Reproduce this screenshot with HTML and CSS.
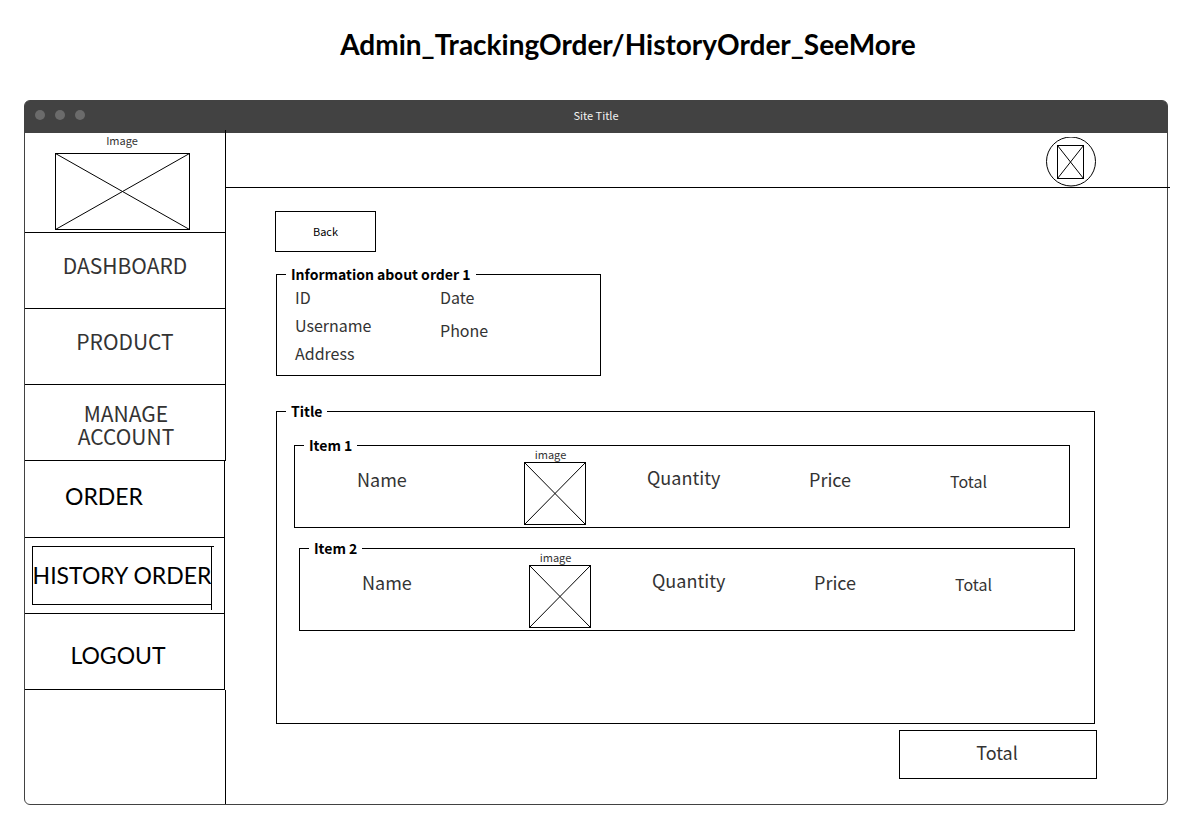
FILE: index.html
```html
<!DOCTYPE html>
<html lang="en">
<head>
<meta charset="utf-8">
<title>Admin_TrackingOrder/HistoryOrder_SeeMore</title>
<link rel="stylesheet" href="styles.css">
</head>
<body>
<h1 class="page-title">Admin_TrackingOrder/HistoryOrder_SeeMore</h1>
<div class="window">
  <div class="titlebar">
    <div class="dots"><span class="dot"></span><span class="dot"></span><span class="dot"></span></div>
    <span class="site-title">Site Title</span>
  </div>
  <div class="layout">
    <aside class="sidebar">
      <div class="brand">
        <span class="caption">Image</span>
        <svg class="brand-image" viewBox="0 0 135 77" role="img" aria-label="Image"><rect x=".5" y=".5" width="134" height="76"/><path d="M.5 .5 134.500 76.500M134.500 .5 .5 76.500"/></svg>
      </div>
      <nav class="nav">
        <a class="nav-item" href="#">DASHBOARD</a>
        <a class="nav-item" href="#">PRODUCT</a>
        <a class="nav-item nav-item-tall" href="#">MANAGE ACCOUNT</a>
        <a class="nav-item nav-item-dark nav-order" href="#">ORDER</a>
        <a class="nav-item nav-item-dark nav-current" href="#" aria-current="page"><span class="current-box">HISTORY ORDER</span></a>
        <a class="nav-item nav-item-dark nav-logout" href="#">LOGOUT</a>
      </nav>
      <div class="sidebar-rest"></div>
    </aside>
    <div class="content">
      <header class="topbar">
        <svg class="avatar" viewBox="0 0 50 50" role="img" aria-label="Profile"><circle cx="25" cy="24.500" r="24.500"/><rect x="11.500" y="8.500" width="26" height="33"/><path d="M11.500 8.500 37.500 41.500M37.500 8.500 11.500 41.500"/></svg>
      </header>
      <main class="main">
        <button class="back" type="button">Back</button>
        <fieldset class="group info">
          <legend>Information about order 1</legend>
          <div class="info-fields">
            <div class="info-col"><span>ID</span><span>Username</span><span>Address</span></div>
            <div class="info-col info-col-loose"><span>Date</span><span>Phone</span></div>
          </div>
        </fieldset>
        <fieldset class="group items">
          <legend>Title</legend>
          <fieldset class="group item">
            <legend>Item 1</legend>
            <div class="item-fields">
              <span class="field name">Name</span>
              <div class="thumb"><span class="caption">image</span><svg class="thumb-image" viewBox="0 0 62 63" role="img" aria-label="image"><rect x=".5" y=".5" width="61" height="62"/><path d="M.5 .5 61.500 62.500M61.500 .5 .5 62.500"/></svg></div>
              <span class="field quantity">Quantity</span>
              <span class="field price">Price</span>
              <span class="field total">Total</span>
            </div>
          </fieldset>
          <fieldset class="group item item-second">
            <legend>Item 2</legend>
            <div class="item-fields">
              <span class="field name">Name</span>
              <div class="thumb"><span class="caption">image</span><svg class="thumb-image" viewBox="0 0 62 63" role="img" aria-label="image"><rect x=".5" y=".5" width="61" height="62"/><path d="M.5 .5 61.500 62.500M61.500 .5 .5 62.500"/></svg></div>
              <span class="field quantity">Quantity</span>
              <span class="field price">Price</span>
              <span class="field total">Total</span>
            </div>
          </fieldset>
        </fieldset>
        <div class="grand-total">Total</div>
      </main>
    </div>
  </div>
</div>
</body>
</html>
```
FILE: styles.css
```css
* { box-sizing: border-box; }

body {
  margin: 0;
  padding: 0 35px 13px 24px;
  min-height: 100vh;
  display: flex;
  flex-direction: column;
  background: #fff;
  color: #333;
  font-family: "Noto Sans CJK SC", "Noto Sans", sans-serif;
}

svg { display: block; fill: none; stroke: #000; stroke-width: 1; }

.page-title {
  margin: 0;
  padding: 27px 0 0 64px;
  height: 100px;
  text-align: center;
  font: bold 28px/34px Lato, sans-serif;
  color: #000;
}

.window {
  flex: 1;
  display: flex;
  flex-direction: column;
  border: 1px solid #424242;
  border-radius: 6px;
}

.titlebar {
  height: 32px;
  display: grid;
  grid-template-columns: 1fr auto 1fr;
  align-items: center;
  padding: 0 10px 4px;
  background: #424242;
  border-radius: 4px 4px 0 0;
}
.dots { display: flex; gap: 10px; }
.dot { width: 10px; height: 10px; border-radius: 50%; background: #6b6b6b; }
.site-title { color: #f2f2f2; font-size: 11px; line-height: 16px; }

.layout { flex: 1; display: flex; }

.sidebar {
  position: relative;
  width: 201px;
  flex: none;
  display: flex;
  flex-direction: column;
}
.sidebar::before {
  content: "";
  position: absolute;
  right: 0;
  top: -3px;
  width: 1px;
  height: 3px;
  background: #000;
}
.brand {
  height: 100px;
  padding-right: 6px;
  display: flex;
  flex-direction: column;
  align-items: center;
  gap: 5px;
  border-right: 1px solid #000;
  border-bottom: 1px solid #000;
}
.caption { font-size: 11px; line-height: 15px; }
.brand-image { width: 135px; height: 77px; }

.nav-item {
  height: 76px;
  padding: 0 0 10px;
  display: flex;
  align-items: center;
  justify-content: center;
  border-right: 1px solid #000;
  border-bottom: 1px solid #000;
  color: #333;
  font-size: 21px;
  line-height: 23px;
  text-align: center;
  text-decoration: none;
}
.nav-item-tall { padding: 4px 46px 0 48px; }
.nav-item-dark {
  margin-right: 1px;
  color: #000;
  font-family: Lato, sans-serif;
  font-size: 23px;
}
.nav-order { height: 77px; padding: 0 41px 6px 0; }
.nav-logout { padding: 8px 13px 0 0; }
.nav-current { padding: 0 5px 0 0; }
.current-box {
  position: relative;
  width: 180px;
  height: 59px;
  border: 1px solid #000;
  line-height: 56px;
  white-space: nowrap;
  display: flex;
  justify-content: center;
}
.current-box::before,
.current-box::after { content: ""; position: absolute; background: #000; }
.current-box::before { top: -1px; right: -3px; width: 2px; height: 1px; }
.current-box::after { bottom: -6px; right: -1px; width: 1px; height: 5px; }
.sidebar-rest { flex: 1; border-right: 1px solid #000; }

.content { flex: 1; min-width: 0; display: flex; flex-direction: column; }
.topbar {
  height: 55px;
  margin-right: -3px;
  padding: 4px 74px 0 0;
  display: flex;
  justify-content: flex-end;
  border-bottom: 1px solid #000;
}
.avatar { width: 50px; height: 50px; }

.main {
  flex: 1;
  padding: 23px 70px 25px 49px;
  display: flex;
  flex-direction: column;
}
.back {
  width: 101px;
  height: 41px;
  padding: 0 0 2px;
  border: 1px solid #000;
  background: #fff;
  color: #000;
  font-family: inherit;
  font-size: 11px;
}

.group { margin: 0; padding: 0; min-width: 0; border: 1px solid #000; }
.group > legend {
  margin-left: 9px;
  padding: 0 5px;
  color: #000;
  font-size: 14px;
  font-weight: bold;
  line-height: 21px;
}
.info { width: 325px; min-height: 112px; margin: 12px 0 0 1px; }
.info-fields {
  margin-top: -2px;
  padding-left: 18px;
  display: grid;
  grid-template-columns: 145px 1fr;
  font-size: 16px;
  line-height: 28px;
}
.info-col { display: flex; flex-direction: column; }
.info-col-loose { gap: 5px; }

.items { flex: 1; min-height: 323px; margin: 25px 2px 0 1px; }
.item { margin: 13px 24px 0 17px; min-height: 93px; }
.item-second { margin: 10px 19px 0 22px; }
.item-fields {
  margin-top: -9px;
  padding-left: 62px;
  display: grid;
  grid-template-columns: 167fr 123fr 162fr 141fr 119fr;
}
.thumb { width: 62px; }
.thumb .caption { display: block; height: 15px; padding-right: 9px; text-align: center; line-height: 14px; }
.thumb-image { width: 62px; height: 63px; }
.field { font-size: 18px; line-height: 28px; padding-top: 18px; }
.quantity { padding-top: 16px; }
.price { padding-top: 18px; }
.total { padding-top: 20px; font-size: 16px; }

.grand-total {
  width: 198px;
  height: 49px;
  margin-top: 6px;
  align-self: flex-end;
  display: flex;
  align-items: center;
  justify-content: center;
  padding: 0 2px 5px 0;
  border: 1px solid #000;
  font-size: 18px;
}
```
